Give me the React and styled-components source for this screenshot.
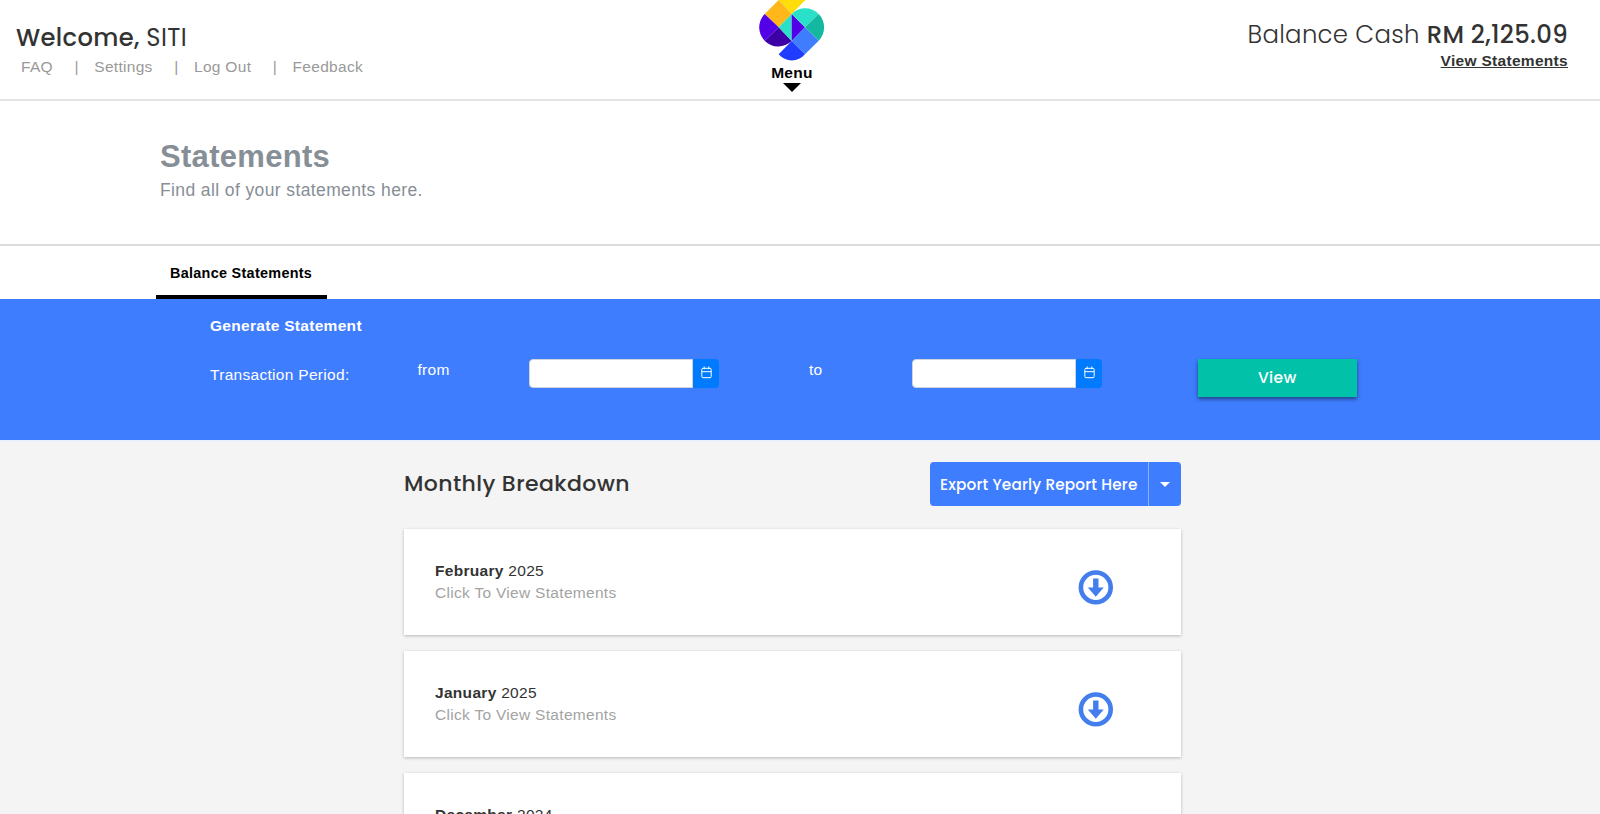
import React from "react";
import styled, { createGlobalStyle } from "styled-components";

const Global = createGlobalStyle`
  * { box-sizing: border-box; }
  html, body { margin: 0; height: 100%; overflow: hidden; }
  body {
    background: #f4f4f4;
    color: #333;
    font-family: "Liberation Sans", Arial, sans-serif;
    font-size: 15.5px;
    line-height: 20px;
    letter-spacing: 0.3px;
  }
`;

const display = `
  font-family: Poppins, Inter, sans-serif;
  letter-spacing: 0;
`;

const Page = styled.div`
  height: 814px;
  overflow: hidden;
`;

const Header = styled.header`
  display: grid;
  grid-template-columns: 1fr auto 1fr;
  height: 101px;
  padding: 0 32px 0 16px;
  background: #fff;
  border-bottom: 2px solid #e4e4e4;
`;

const Account = styled.div`
  padding-top: 22px;
`;

const Welcome = styled.div`
  ${display}
  font-size: 24.2px;
  line-height: 32px;
  font-weight: 500;
  letter-spacing: 0.35px;
  span { font-weight: 400; }
`;

const Links = styled.nav`
  display: flex;
  margin-top: 3px;
  padding-left: 5px;
  color: #999;
`;

const Link = styled.a`
  color: inherit;
  &:not(:last-child)::after {
    content: "|";
    margin: 0 15.5px 0 21.5px;
  }
`;

const MenuToggle = styled.div`
  display: flex;
  flex-direction: column;
  align-items: center;
  width: 72px;
  color: #000;
  font-weight: 700;
  svg { display: block; }
`;

const MenuLabel = styled.span`
  margin-top: -1px;
`;

const MenuArrow = styled.i`
  border: 9px solid transparent;
  border-top-color: #000;
  border-bottom: 0;
`;

const Balance = styled.div`
  padding-top: 20px;
  text-align: right;
`;

const Amount = styled.div`
  ${display}
  font-size: 24.4px;
  line-height: 30px;
  font-weight: 300;
  letter-spacing: 0.3px;
  b { font-weight: 500; }
`;

const StatementsLink = styled.a`
  display: block;
  margin-top: 1px;
  font-weight: 700;
  text-decoration: underline;
`;

const TitleBlock = styled.section`
  height: 145px;
  padding: 38px 160px 0;
  background: #fff;
  border-bottom: 2px solid #dcdcdc;
  color: #868e96;
`;

const Title = styled.h1`
  margin: 0 0 4px;
  font-size: 31px;
  line-height: 36px;
  letter-spacing: 0.3px;
`;

const Subtitle = styled.p`
  margin: 0;
  font-size: 17.5px;
  line-height: 23px;
  letter-spacing: 0.39px;
`;

const Tabs = styled.div`
  display: flex;
  height: 53px;
  padding-left: 156px;
  background: #fff;
`;

const Tab = styled.div`
  width: 171px;
  padding: 17px 0 0 14px;
  border-bottom: 4px solid #000;
  color: #000;
  font-size: 14.4px;
  font-weight: 700;
`;

const Generate = styled.section`
  height: 143px;
  padding: 17px 210px 0;
  background: #3f7dff;
  border-bottom: 2px solid #e8f1fd;
  color: #fff;
`;

const GenerateTitle = styled.h2`
  margin: 0 0 23px;
  font-size: 15.5px;
`;

const PeriodRow = styled.div`
  display: grid;
  grid-template-columns: 207.5px 111.5px 280px 103px 285.5px 159.5px;
  align-items: start;
`;

const Label = styled.span`
  padding-top: ${(p) => p.$top}px;
`;

const DateField = styled.div`
  display: flex;
  width: 190px;
  height: 29px;
`;

const DateInput = styled.input`
  width: 164px;
  border: 1px solid #ced4da;
  border-radius: 4px 0 0 4px;
  background: #fff;
  outline: 0;
`;

const DateButton = styled.button`
  display: flex;
  align-items: center;
  justify-content: center;
  width: 26px;
  padding: 0 0 2px 0;
  border: 0;
  border-radius: 0 4px 4px 0;
  background: #007bff;
  color: #fff;
`;

const ViewButton = styled.button`
  ${display}
  height: 37.5px;
  padding: 0 0 1px;
  border: 0;
  background: #02c1a9;
  box-shadow: 0 2px 4px rgba(0, 0, 0, 0.5);
  color: #fff;
  font-size: 15.6px;
  font-weight: 500;
  letter-spacing: 0.3px;
`;

const Breakdown = styled.main`
  width: 776.5px;
  margin-left: 404px;
  padding-top: 20px;
`;

const BreakdownHead = styled.div`
  display: flex;
  align-items: center;
  justify-content: space-between;
  margin-bottom: 23px;
`;

const BreakdownTitle = styled.h2`
  ${display}
  margin: 0;
  font-size: 22px;
  line-height: 30px;
  font-weight: 500;
  letter-spacing: 0.42px;
`;

const SplitButton = styled.div`
  ${display}
  display: flex;
  width: 251px;
  height: 44px;
  border-radius: 4px;
  background: #3f7dff;
  color: #fff;
  font-size: 15.3px;
  font-weight: 500;
  letter-spacing: 0.16px;
  line-height: 45px;
  white-space: nowrap;
`;

const SplitLabel = styled.span`
  width: 218.5px;
  padding-left: 10.5px;
`;

const SplitCaret = styled.span`
  display: flex;
  flex: 1;
  align-items: center;
  justify-content: center;
  border-left: 1px solid #8cb1ff;
  &::after {
    content: "";
    border: 5px solid transparent;
    border-top-color: #fff;
    border-bottom: 0;
  }
`;

const Card = styled.article`
  display: flex;
  justify-content: space-between;
  height: 106px;
  margin-bottom: 16px;
  padding: 32px 67px 0 31px;
  background: #fff;
  box-shadow: 0 1px 3px rgba(0, 0, 0, 0.25);
  svg { margin-top: 8px; }
`;

const Month = styled.div`
  line-height: 20px;
`;

const Hint = styled.div`
  margin-top: 2px;
  color: #a3a3a3;
`;

const Logo = () => (
  <svg width="72" height="64" viewBox="0 0 216 192">
    <path d="M68 0L107 42L147 1V0Z" fill="#ffdd0a" />
    <path d="M26 42L68 0L107 42L68 82Z" fill="#ffb71b" />
    <path d="M68 82L26 42A57 57 0 0 0 26 122Z" fill="#5400e6" />
    <path d="M68 82L26 122A57 57 0 0 0 107 123Z" fill="#3c00a6" />
    <path d="M107 42V123L68 82Z" fill="#2be0c9" />
    <path d="M107 42L147 82L107 123Z" fill="#5400e6" />
    <path d="M147 82L107 42A57 57 0 0 1 188 42Z" fill="#2be0c9" />
    <path d="M147 82L188 42A57 57 0 0 1 188 122Z" fill="#14b8a0" />
    <path d="M147 82L188 122L147 163L107 123Z" fill="#3f7dff" />
    <path d="M107 123L147 163A52 52 0 0 1 68 163Z" fill="#1f3cff" />
  </svg>
);

const CalendarIcon = () => (
  <svg width="11" height="13" viewBox="0 0 11 13" fill="none" stroke="currentColor" strokeWidth="1">
    <rect x="0.8" y="2.3" width="9.4" height="9.4" rx="1.2" />
    <path d="M0.8 5.7H10.2M3.2 0.5V3.2M7.8 0.5V3.2" />
  </svg>
);

const DownloadIcon = () => (
  <svg width="36" height="36" viewBox="0 0 36 36">
    <circle cx="17.8" cy="18.4" r="14.9" fill="none" stroke="#447eec" strokeWidth="4.6" />
    <path d="M15.1 9.6H20.5V18.6H25.8L17.8 27.7L9.8 18.6H15.1Z" fill="#447eec" />
  </svg>
);

const links = ["FAQ", "Settings", "Log Out", "Feedback"];
const months = [
  ["February", 2025],
  ["January", 2025],
  ["December", 2024],
];

const DatePicker = () => (
  <DateField>
    <DateInput />
    <DateButton><CalendarIcon /></DateButton>
  </DateField>
);

export default function App() {
  return (
    <Page>
      <Global />
      <Header>
        <Account>
          <Welcome>Welcome, <span>SITI</span></Welcome>
          <Links>{links.map((l) => <Link key={l}>{l}</Link>)}</Links>
        </Account>
        <MenuToggle>
          <Logo />
          <MenuLabel>Menu</MenuLabel>
          <MenuArrow />
        </MenuToggle>
        <Balance>
          <Amount>Balance Cash <b>RM 2,125.09</b></Amount>
          <StatementsLink>View Statements</StatementsLink>
        </Balance>
      </Header>
      <TitleBlock>
        <Title>Statements</Title>
        <Subtitle>Find all of your statements here.</Subtitle>
      </TitleBlock>
      <Tabs><Tab>Balance Statements</Tab></Tabs>
      <Generate>
        <GenerateTitle>Generate Statement</GenerateTitle>
        <PeriodRow>
          <Label $top={6}>Transaction Period:</Label>
          <Label $top={1}>from</Label>
          <DatePicker />
          <Label $top={1}>to</Label>
          <DatePicker />
          <ViewButton>View</ViewButton>
        </PeriodRow>
      </Generate>
      <Breakdown>
        <BreakdownHead>
          <BreakdownTitle>Monthly Breakdown</BreakdownTitle>
          <SplitButton>
            <SplitLabel>Export Yearly Report Here</SplitLabel>
            <SplitCaret />
          </SplitButton>
        </BreakdownHead>
        {months.map(([m, y]) => (
          <Card key={m}>
            <div>
              <Month><b>{m}</b> {y}</Month>
              <Hint>Click To View Statements</Hint>
            </div>
            <DownloadIcon />
          </Card>
        ))}
      </Breakdown>
    </Page>
  );
}
